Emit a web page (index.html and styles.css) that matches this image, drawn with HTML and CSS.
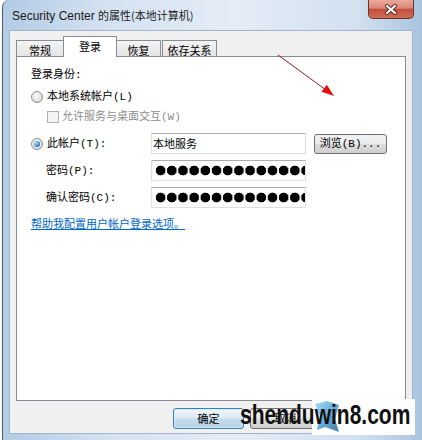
FILE: index.html
```html
<!DOCTYPE html>
<html>
<head>
    <title>Security Center 的属性</title>
    <link rel="stylesheet" href="styles.css">
</head>
<body>
    <div class="window">
        <!-- Barra de título -->
        <div class="titlebar">
            <span class="title">Security Center <span class="cjk">的属性(本地计算机)</span></span>
            <div class="close">
                <svg width="14" height="11" viewBox="0 0 14 11">
                    <path d="M3 2 L11 9 M11 2 L3 9" stroke="#5b2a24" stroke-width="4" stroke-linecap="round"/>
                    <path d="M3 2 L11 9 M11 2 L3 9" stroke="#ffffff" stroke-width="2.2" stroke-linecap="round"/>
                </svg>
            </div>
        </div>

        <div class="client">
            <!-- Pestañas -->
            <div class="tabs">
                <div class="tab tab-general">常规</div>
                <div class="tab tab-login active">登录</div>
                <div class="tab tab-recover">恢复</div>
                <div class="tab tab-deps">依存关系</div>
            </div>

            <!-- Contenido de la pestaña -->
            <div class="panel">
                <div class="caption">登录身份:</div>

                <div class="option row-local">
                    <span class="radio"></span>
                    <span>本地系统帐户(L)</span>
                </div>

                <div class="option row-desktop disabled">
                    <span class="checkbox"></span>
                    <span>允许服务与桌面交互(W)</span>
                </div>

                <div class="field row-account">
                    <div class="option">
                        <span class="radio checked"></span>
                        <span>此帐户(T):</span>
                    </div>
                    <div class="input">本地服务</div>
                    <div class="btn">浏览(B)...</div>
                </div>

                <div class="field">
                    <div class="field-label">密码(P):</div>
                    <div class="input"><span class="dots"></span></div>
                </div>

                <div class="field">
                    <div class="field-label">确认密码(C):</div>
                    <div class="input"><span class="dots"></span></div>
                </div>

                <a class="help" href="#">帮助我配置用户帐户登录选项。</a>
            </div>

            <!-- Botones -->
            <div class="buttons">
                <div class="btn btn-dialog default">确定</div>
                <div class="btn btn-dialog">取消</div>
            </div>
        </div>
    </div>

    <!-- Flecha roja -->
    <svg class="arrow" width="422" height="440" viewBox="0 0 422 440">
        <line x1="278" y1="55" x2="326" y2="90" stroke="#8c1c1c" stroke-width="1"/>
        <polygon points="334,96 321.5,91.8 326.8,84.8" fill="#e01010"/>
    </svg>

    <!-- Marca de agua -->
    <div class="watermark-box">
        <svg class="wm-logo" width="28" height="33" viewBox="0 0 28 33">
            <defs>
                <linearGradient id="wm" x1="0" y1="0" x2="1" y2="1">
                    <stop offset="0" stop-color="#8fd8f4"/>
                    <stop offset="0.55" stop-color="#3b93cc"/>
                    <stop offset="1" stop-color="#1d5f94"/>
                </linearGradient>
            </defs>
            <path d="M1 4 L13 1 L25 5 L21 19 L25 32 L11 27 L3 30 L6 16 Z" fill="url(#wm)" opacity="0.8"/>
        </svg>
    </div>
    <div class="watermark">shenduwin8.com</div>
</body>
</html>
```

FILE: styles.css
```css
/* Estilos generales */
* {
    margin: 0;
    padding: 0;
    box-sizing: border-box;
}

body {
    width: 422px;
    height: 440px;
    overflow: hidden;
    position: relative;
    background: #ffffff;
    color: #000000;
    font-family: "Liberation Mono", "Noto Sans CJK SC", monospace;
    font-size: 11px;
    line-height: 14px;
}

/* Ventana */
.window {
    margin-left: 2px;
    height: 440px;
    padding: 0 9px 6px 6px;
    border-left: 1px solid #4a5d74;
    border-top-left-radius: 7px;
    background: linear-gradient(to right, #b3cbe5 0%, #d4e2f1 25%, #e4ecf6 55%, #d2e0f0 85%, #a9c3df 100%);
    display: flex;
    flex-direction: column;
}

.titlebar {
    height: 30px;
    display: flex;
    align-items: center;
    padding-left: 3px;
}

.title {
    font-family: "Liberation Sans", "Noto Sans CJK SC", sans-serif;
    font-size: 12px;
    color: #1a1a1a;
}

.title .cjk {
    font-family: "Noto Sans CJK SC", sans-serif;
    font-size: 11px;
}

.close {
    margin-left: auto;
    margin-right: -1px;
    align-self: flex-start;
    width: 46px;
    height: 19px;
    border: 1px solid #6b3329;
    border-top: 0;
    border-radius: 0 0 5px 5px;
    background: linear-gradient(#e9aa9c 0%, #d98675 45%, #c2503d 52%, #cf6d58 100%);
    display: flex;
    align-items: center;
    justify-content: center;
}

/* Área de cliente */
.client {
    flex: 1;
    background: #f0f0f0;
    border: 1px solid #a3b5ca;
    display: flex;
    flex-direction: column;
    padding: 5px 6px 0 6px;
}

/* Pestañas */
.tabs {
    height: 20px;
    display: flex;
    align-items: flex-end;
    font-family: "Noto Sans CJK SC", sans-serif;
    font-size: 11px;
}

.tab {
    height: 16px;
    border: 1px solid #898c95;
    border-bottom: 0;
    background: linear-gradient(#f4f4f4, #e4e4e4);
    text-align: center;
    line-height: 16px;
    padding-top: 1px;
}

.tab-general { width: 48px; }
.tab-login { width: 54px; margin-left: -1px; }
.tab-recover { width: 45px; margin-left: -1px; }
.tab-deps { width: 55px; margin-left: 1px; }

.tab.active {
    height: 21px;
    margin-bottom: -1px;
    background: #ffffff;
    position: relative;
    z-index: 1;
    line-height: 18px;
    padding-top: 0;
}

/* Panel */
.panel {
    height: 345px;
    background: #ffffff;
    border: 1px solid #898c95;
    padding: 11px 0 0 14px;
    display: flex;
    flex-direction: column;
}

.caption {
    height: 14px;
}

.option {
    display: flex;
    align-items: center;
    gap: 4px;
    height: 14px;
}

.row-local { margin-top: 8px; }

.row-desktop {
    margin-top: 6px;
    margin-left: 16px;
    gap: 3px;
}

.disabled {
    color: #8d8d8d;
}

.radio {
    width: 12px;
    height: 12px;
    border-radius: 50%;
    border: 1px solid #8e8f8f;
    background: radial-gradient(circle at 40% 35%, #fafafa 0%, #e2e2e2 60%, #cfcfcf 100%);
    position: relative;
    flex-shrink: 0;
}

.radio.checked::after {
    content: "";
    position: absolute;
    left: 2px;
    top: 2px;
    width: 6px;
    height: 6px;
    border-radius: 50%;
    background: radial-gradient(circle at 35% 35%, #b9e6fc 0%, #3d8fd9 55%, #1b4f8c 100%);
}

.checkbox {
    width: 12px;
    height: 12px;
    border: 1px solid #b1b1b1;
    background: #f4f4f4;
    flex-shrink: 0;
}

.field {
    display: grid;
    grid-template-columns: 112px 155px 73px;
    column-gap: 8px;
    align-items: center;
    height: 21px;
    margin-top: 6px;
}

.row-account { margin-top: 9px; }

.field-label {
    padding-left: 15px;
}

.input {
    height: 21px;
    border: 1px solid #dbdfe6;
    border-top-color: #abadb3;
    background: #ffffff;
    padding-left: 1px;
    line-height: 18px;
    font-family: "Noto Sans CJK SC", sans-serif;
    overflow: hidden;
}

.dots {
    display: block;
    margin-left: 2px;
    width: 160px;
    height: 19px;
    background-image: radial-gradient(circle, #000000 0 4.6px, transparent 5.2px);
    background-size: 11.2px 19px;
    background-repeat: repeat-x;
}

/* Botones */
.btn {
    height: 20px;
    border: 1px solid #707070;
    border-radius: 3px;
    background: linear-gradient(#f2f2f2 0%, #ebebeb 48%, #dddddd 52%, #cfcfcf 100%);
    text-align: center;
    line-height: 18px;
}

.help {
    margin-top: 8px;
    height: 14px;
    color: #0066cc;
    text-decoration: underline;
    font-family: "Noto Sans CJK SC", sans-serif;
}

.buttons {
    display: flex;
    justify-content: flex-end;
    gap: 6px;
    margin-top: 7px;
    padding-right: 85px;
}

.btn-dialog {
    width: 71px;
    height: 21px;
    font-family: "Noto Sans CJK SC", sans-serif;
}

.btn-dialog.default {
    border-color: #3c7fb1;
    background: linear-gradient(#eef5fb 0%, #dde9f4 48%, #c9dcec 52%, #b8d0e6 100%);
    box-shadow: inset 0 0 0 1px #cfeefc;
}

/* Flecha */
.arrow {
    position: absolute;
    left: 0;
    top: 0;
    pointer-events: none;
}

/* Marca de agua */
.watermark-box {
    position: absolute;
    left: 312px;
    top: 399px;
    width: 103px;
    height: 36px;
    background: #ffffff;
    padding: 1px 0 0 2px;
}

.wm-logo {
    display: block;
}

.watermark {
    position: absolute;
    left: 240px;
    top: 397px;
    font-family: "Liberation Sans", sans-serif;
    font-size: 28px;
    font-weight: bold;
    line-height: 36px;
    color: #111111;
    transform: scaleX(0.75);
    transform-origin: 0 50%;
    white-space: nowrap;
}
```
